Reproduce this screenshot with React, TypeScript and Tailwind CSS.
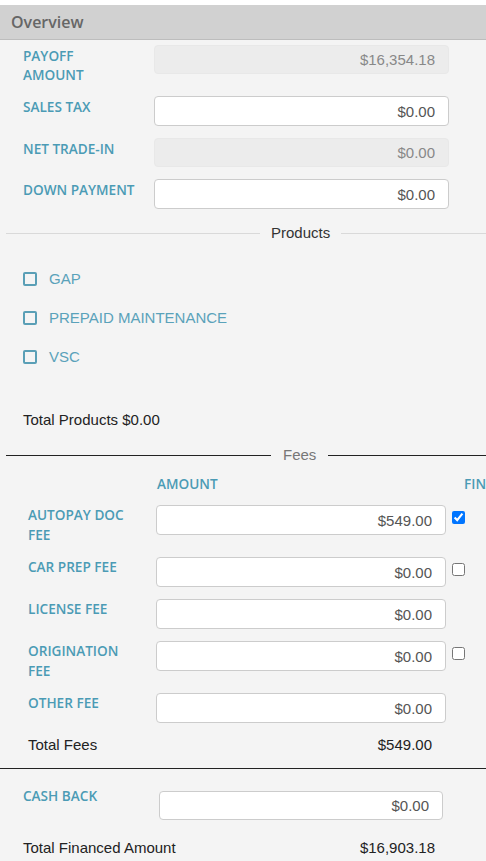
import React from "react";

const label = "font-['Open_Sans',sans-serif] font-semibold text-[13.6px] uppercase text-[#4b9bb5]";
const money = "font-['Liberation_Sans',Arial,sans-serif] text-[15px]";

function Field({ value, disabled }: { value: string; disabled?: boolean }) {
  return (
    <input
      readOnly
      value={value}
      className={`${money} w-full h-full rounded-[4px] border text-right pr-[13px] outline-none ${
        disabled ? "bg-[#ececec] border-[#e8e8e8] text-[#888]" : "bg-white border-[#cccccc] text-[#555]"
      }`}
    />
  );
}

function OverviewRow({ name, value, disabled }: { name: string; value: string; disabled?: boolean }) {
  return (
    <div className="flex items-start">
      <div className="w-[131px] shrink-0">
        <div className={`${label} w-[113px] pt-[1px] leading-[19px]`}>{name}</div>
      </div>
      <div className={`flex-1 ${disabled ? "h-[29px]" : "h-[30px]"}`}>
        <Field value={value} disabled={disabled} />
      </div>
    </div>
  );
}

function ProductRow({ name }: { name: string }) {
  return (
    <div className="flex items-center h-[20px]">
      <span className="w-[14px] h-[14px] rounded-[2px] border-2 border-[#5a9fb6] bg-[#f4f4f4]" />
      <span className={`${money} ml-[12px] text-[#5aa2ba]`}>{name}</span>
    </div>
  );
}

function FeeRow({ name, value, check }: { name: string; value: string; check?: "on" | "off" }) {
  return (
    <div className="flex items-start">
      <div className="w-[128px] shrink-0">
        <div className={`${label} w-[110px] leading-[20px]`}>{name}</div>
      </div>
      <div className="w-[290px] h-[30px] shrink-0">
        <Field value={value} />
      </div>
      {check && (
        <input
          type="checkbox"
          readOnly
          checked={check === "on"}
          className="ml-[6px] mt-[6px] w-[13px] h-[13px] m-0 shrink-0"
        />
      )}
    </div>
  );
}

export default function App() {
  return (
    <div className="w-[486px] h-[861px] overflow-hidden bg-[#f4f4f4] text-[#222]">
      <div className="h-[5px] bg-white" />
      <div className="h-[35px] bg-[#d1d1d1] border-b border-[#bdbdbd] flex items-center px-[11px]">
        <span className="font-['Open_Sans',sans-serif] font-semibold text-[16px] text-[#666]">Overview</span>
      </div>

      {/* overview fields */}
      <div className="pl-[23px] pr-[37px] pt-[5px] flex flex-col gap-[12px]">
        <OverviewRow name="Payoff Amount" value="$16,354.18" disabled />
        <OverviewRow name="Sales Tax" value="$0.00" />
        <OverviewRow name="Net Trade-In" value="$0.00" disabled />
        <OverviewRow name="Down Payment" value="$0.00" />
      </div>

      {/* products */}
      <div className="mt-[14px] pl-[6px] flex items-center h-[20px]">
        <div className="w-[254px] h-px bg-[#d9d9d9]" />
        <span className={`${money} mx-[11px] text-[#333]`}>Products</span>
        <div className="flex-1 h-px bg-[#d9d9d9]" />
      </div>
      <div className="pl-[23px] mt-[26px] flex flex-col gap-[19px]">
        <ProductRow name="GAP" />
        <ProductRow name="PREPAID MAINTENANCE" />
        <ProductRow name="VSC" />
      </div>
      <div className={`${money} pl-[23px] mt-[43px] leading-[20px]`}>Total Products $0.00</div>

      {/* fees */}
      <div className="mt-[15px] pl-[6px] flex items-center h-[20px]">
        <div className="w-[265px] h-px bg-[#222]" />
        <span className={`${money} mx-[12px] text-[#777]`}>Fees</span>
        <div className="flex-1 h-px bg-[#222]" />
      </div>
      <div className="mt-[9px] pl-[28px] flex h-[20px] items-center whitespace-nowrap">
        <div className="w-[129px] shrink-0" />
        <div className={`${label} w-[307px] shrink-0`}>Amount</div>
        <div className={`${label} shrink-0`}>Financed</div>
      </div>
      <div className="mt-[11px] pl-[28px] flex flex-col gap-[12px]">
        <FeeRow name="Autopay Doc Fee" value="$549.00" check="on" />
        <FeeRow name="Car Prep Fee" value="$0.00" check="off" />
        <FeeRow name="License Fee" value="$0.00" />
        <FeeRow name="Origination Fee" value="$0.00" check="off" />
        <FeeRow name="Other Fee" value="$0.00" />
        <div className={`${money} flex w-[418px] pr-[14px] leading-[20px]`}>
          <span className="flex-1">Total Fees</span>
          <span>$549.00</span>
        </div>
      </div>
      <div className="mt-[13px] h-px bg-[#222]" />

      {/* cash back */}
      <div className="mt-[17px] pl-[23px] flex items-start">
        <div className={`${label} w-[136px] shrink-0 leading-[20px]`}>Cash Back</div>
        <div className="w-[284px] h-[29px] mt-[5px] shrink-0">
          <Field value="$0.00" />
        </div>
      </div>
      <div className={`${money} mt-[18px] pl-[23px] pr-[51px] flex leading-[20px]`}>
        <span className="flex-1">Total Financed Amount</span>
        <span>$16,903.18</span>
      </div>
    </div>
  );
}
